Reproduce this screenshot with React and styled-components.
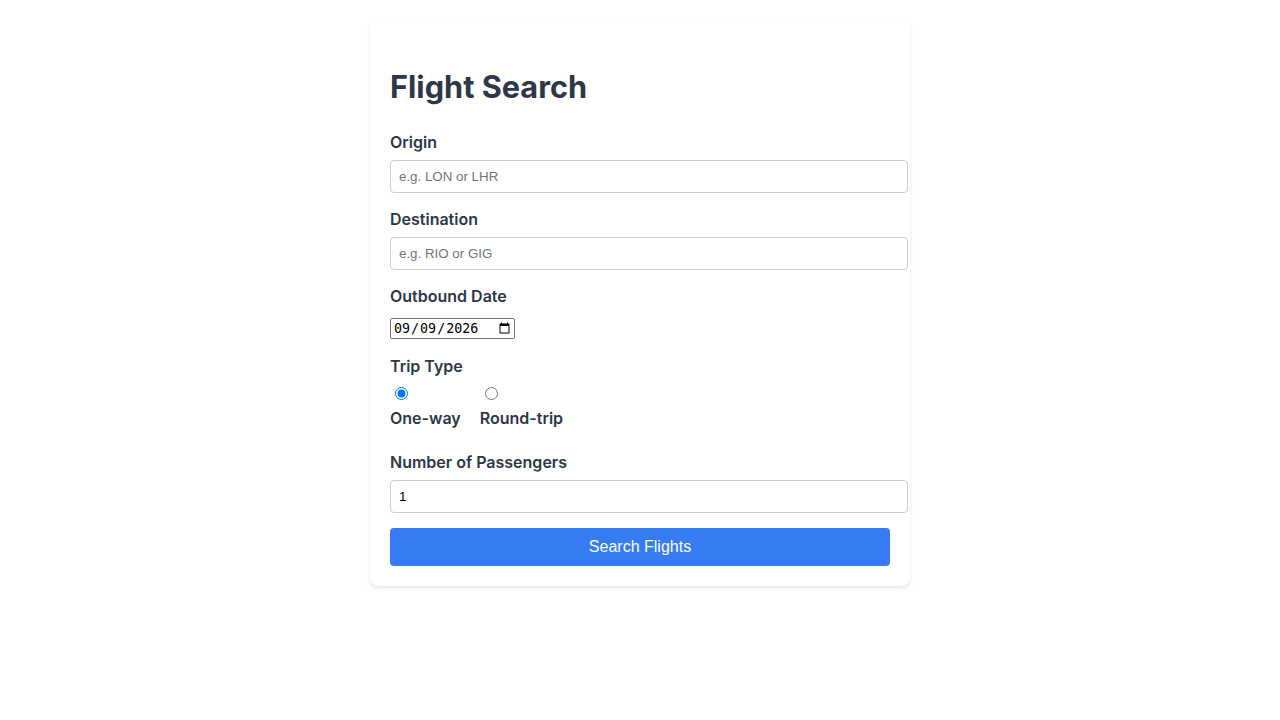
import React, { useState } from 'react';
import styled, { createGlobalStyle } from 'styled-components';

const GlobalStyle = createGlobalStyle`
  body {
    margin: 0;
    background: #ffffff;
    font-family: Inter, "Liberation Sans", sans-serif;
  }
`;

const Card = styled.div`
  width: 500px;
  margin: 20px auto;
  padding: 20px;
  background: #ffffff;
  border-radius: 8px;
  box-shadow: 0 2px 4px rgba(0, 0, 0, 0.1);
  color: #2d3748;
`;

const Title = styled.h1`
  font-size: 30.7px;
  font-weight: 700;
  margin: 28px 0 27px;
`;

const FormGroup = styled.div`
  margin-bottom: ${(p) => (p.$last ? '15px' : '16px')};
`;

const Label = styled.label`
  display: block;
  font-size: 16px;
  font-weight: 600;
  margin-bottom: 8px;
`;

const TextInput = styled.input`
  display: block;
  width: 100%;
  padding: 8px;
  border: 1px solid #ccc;
  border-radius: 4px;
  font-family: "Liberation Sans", Arial, sans-serif;
  font-size: 13.33px;
  color: #000;

  &::placeholder {
    color: #757575;
  }
`;

const DateLine = styled.div`
  line-height: 26px;
  margin-top: 1px;
`;

const DateInput = styled.input`
  display: inline-block;
  vertical-align: middle;
`;

const RadioRow = styled.div`
  display: flex;
  gap: 19px;
`;

const RadioOption = styled.label`
  display: flex;
  flex-direction: column;
  align-items: flex-start;
  font-size: 16px;
  font-weight: 600;
  margin-bottom: 8px;
  cursor: pointer;

  input {
    margin: 3px 3px 8px 5px;
  }
`;

const SubmitButton = styled.button`
  display: block;
  width: 100%;
  height: 38px;
  border: none;
  border-radius: 4px;
  background: #367bf0;
  color: #ffffff;
  font-family: "Liberation Sans", Arial, sans-serif;
  font-size: 16px;
  cursor: pointer;
`;

export default function App() {
  const [tripType, setTripType] = useState('one-way');

  return (
    <>
      <GlobalStyle />
      <Card>
        <Title>Flight Search</Title>
        <form onSubmit={(e) => e.preventDefault()}>
          <FormGroup>
            <Label htmlFor="origin">Origin</Label>
            <TextInput id="origin" type="text" placeholder="e.g. LON or LHR" />
          </FormGroup>
          <FormGroup>
            <Label htmlFor="destination">Destination</Label>
            <TextInput id="destination" type="text" placeholder="e.g. RIO or GIG" />
          </FormGroup>
          <FormGroup>
            <Label htmlFor="date">Outbound Date</Label>
            <DateLine>
              <DateInput id="date" type="date" defaultValue="2026-09-09" />
            </DateLine>
          </FormGroup>
          <FormGroup>
            <Label>Trip Type</Label>
            <RadioRow>
              <RadioOption>
                <input
                  type="radio"
                  name="trip"
                  checked={tripType === 'one-way'}
                  onChange={() => setTripType('one-way')}
                />
                One-way
              </RadioOption>
              <RadioOption>
                <input
                  type="radio"
                  name="trip"
                  checked={tripType === 'round-trip'}
                  onChange={() => setTripType('round-trip')}
                />
                Round-trip
              </RadioOption>
            </RadioRow>
          </FormGroup>
          <FormGroup $last>
            <Label htmlFor="passengers">Number of Passengers</Label>
            <TextInput id="passengers" type="number" min="1" defaultValue="1" />
          </FormGroup>
          <SubmitButton type="submit">Search Flights</SubmitButton>
        </form>
      </Card>
    </>
  );
}
